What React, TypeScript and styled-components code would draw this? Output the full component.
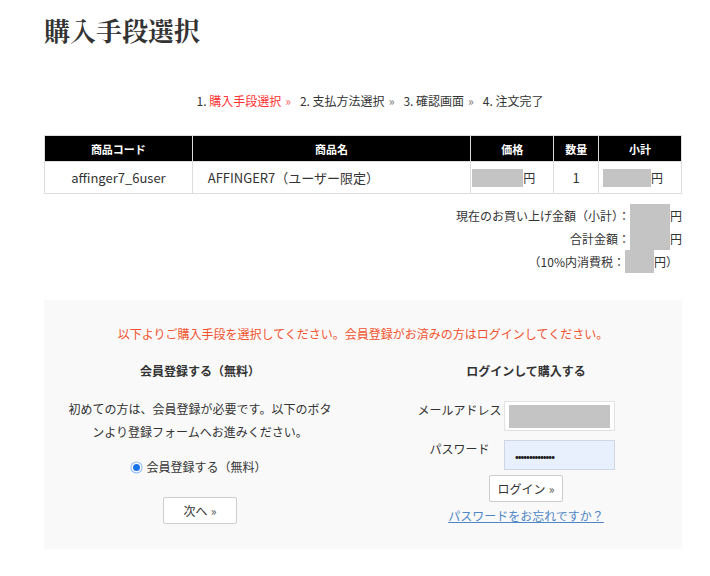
import React from "react";
import styled, { createGlobalStyle } from "styled-components";

const Global = createGlobalStyle`
  html, body { margin: 0; padding: 0; background: #fff; }
  body {
    font-family: "Noto Sans CJK JP", "Noto Sans", sans-serif;
    color: #333;
  }
`;

const Page = styled.div`
  width: 638px;
  padding: 12px 28px 28px 44px;
`;

const Title = styled.h1`
  margin: 0;
  font-family: "Noto Serif CJK JP", "Noto Sans CJK JP", serif;
  font-size: 26px;
  line-height: 36px;
  font-weight: 700;
  color: #333;
  letter-spacing: 0;
`;

const Steps = styled.ol`
  list-style: none;
  margin: 43px 0 0;
  padding: 0 0 0 14px;
  display: flex;
  justify-content: center;
  gap: 9px;
  font-size: 12px;
  line-height: 20px;
`;

const Step = styled.li<{ $active?: boolean }>`
  color: #333;
  span.name { color: ${(p) => (p.$active ? "#f33" : "#333")}; }
  span.sep {
    margin-left: 4px;
    font-size: 12px;
    color: ${(p) => (p.$active ? "#f66" : "#777")};
  }
`;

const Table = styled.table`
  margin-top: 24px;
  width: 100%;
  border-collapse: collapse;
  table-layout: fixed;
  font-size: 13px;
`;

const ColW = styled.col<{ $w: number }>`
  width: ${(p) => (p.$w / 638) * 100}%;
`;

const Th = styled.th`
  height: 25px;
  padding: 0;
  background: #000;
  color: #fff;
  font-size: 11px;
  font-weight: 700;
  border: 1px solid #ddd;
  text-align: center;
`;

const Td = styled.td<{ $align?: string; $pad?: number }>`
  height: 31px;
  padding: 0 ${(p) => p.$pad ?? 0}px;
  border: 1px solid #ddd;
  text-align: ${(p) => p.$align ?? "center"};
  color: #333;
`;

const Amount = styled.div<{ $pad: number }>`
  display: flex;
  align-items: center;
  padding-left: ${(p) => p.$pad}px;
  font-size: 12px;
`;

const Hidden = styled.span<{ $w: number; $h?: number }>`
  display: inline-block;
  width: ${(p) => p.$w}px;
  height: ${(p) => p.$h ?? 18}px;
  background: #c4c4c4;
  vertical-align: middle;
`;

const Summary = styled.div`
  margin-top: 10px;
  display: flex;
  flex-direction: column;
  align-items: flex-end;
  font-size: 12px;
  line-height: 23px;
`;

const SumLine = styled.div<{ $right: number }>`
  display: flex;
  align-items: center;
  padding-right: ${(p) => p.$right}px;
`;

const Panel = styled.section`
  margin-top: 27px;
  background: #f9f9f9;
  padding: 24px 21px 24px;
`;

const Notice = styled.p`
  margin: 0;
  text-align: center;
  color: #f0532d;
  font-size: 12px;
  line-height: 20px;
`;

const Columns = styled.div`
  margin-top: 17px;
  display: grid;
  grid-template-columns: 270px 270px;
  gap: 56px;
`;

const Col = styled.div`
  display: flex;
  flex-direction: column;
  align-items: center;
`;

const ColTitle = styled.h3`
  margin: 0;
  font-size: 12px;
  line-height: 20px;
  font-weight: 700;
  color: #333;
`;

const Para = styled.p`
  margin: 16px 0 0;
  font-size: 12px;
  line-height: 23px;
  text-align: center;
  color: #333;
`;

const RadioRow = styled.label`
  margin-top: 14px;
  display: flex;
  align-items: center;
  gap: 4px;
  font-size: 12px;
  line-height: 20px;
  color: #333;
`;

const RadioDot = styled.span`
  width: 7px;
  height: 7px;
  border-radius: 50%;
  background: #1a73e8;
  box-shadow: 0 0 0 1.5px #fff, 0 0 0 2.5px #8ab4f8;
  margin-right: 2px;
`;

const Button = styled.button<{ $w: number; $mt: number }>`
  margin-top: ${(p) => p.$mt}px;
  width: ${(p) => p.$w}px;
  height: 27px;
  padding: 0;
  background: #fff;
  border: 1px solid #ccc;
  border-radius: 2px;
  font-family: "Noto Sans CJK JP", sans-serif;
  font-size: 12px;
  color: #333;
  span { font-size: 12px; color: #555; margin-left: 3px; }
`;

const Form = styled.div`
  margin-top: 20px;
  align-self: flex-start;
  padding-left: 26px;
  display: grid;
  grid-template-columns: 85px 111px;
  column-gap: 2px;
  row-gap: 9px;
`;

const Label = styled.span`
  text-align: center;
  font-size: 12px;
  line-height: 16px;
  padding-top: 1px;
  color: #333;
`;

const Input = styled.div<{ $filled?: boolean }>`
  height: 28px;
  border: 1px solid ${(p) => (p.$filled ? "#cfd6e2" : "#e2e2e2")};
  background: ${(p) => (p.$filled ? "#e8f0fe" : "#fff")};
  display: flex;
  align-items: center;
  padding: 0 4px;
  font-size: 10px;
  letter-spacing: -1px;
  color: #222;
`;

const Dots = styled.span`
  padding-left: 6px;
  font-weight: 700;
`;

const Forgot = styled.a`
  margin-top: 5px;
  font-size: 12px;
  line-height: 18px;
  color: #4f86c6;
  text-decoration: underline;
`;

export default function App() {
  return (
    <Page>
      <Global />
      <Title>購入手段選択</Title>
      <Steps>
        <Step $active>
          1. <span className="name">購入手段選択</span>
          <span className="sep">»</span>
        </Step>
        <Step>
          2. <span className="name">支払方法選択</span>
          <span className="sep">»</span>
        </Step>
        <Step>
          3. <span className="name">確認画面</span>
          <span className="sep">»</span>
        </Step>
        <Step>
          4. <span className="name">注文完了</span>
        </Step>
      </Steps>

      <Table>
        <colgroup>
          <ColW $w={148} />
          <ColW $w={279} />
          <ColW $w={83} />
          <ColW $w={45} />
          <ColW $w={83} />
        </colgroup>
        <thead>
          <tr>
            <Th>商品コード</Th>
            <Th>商品名</Th>
            <Th>価格</Th>
            <Th>数量</Th>
            <Th>小計</Th>
          </tr>
        </thead>
        <tbody>
          <tr>
            <Td>affinger7_6user</Td>
            <Td $align="left" $pad={15}>
              AFFINGER7（ユーザー限定）
            </Td>
            <Td $align="left">
              <Amount $pad={1}>
                <Hidden $w={51} />円
              </Amount>
            </Td>
            <Td>1</Td>
            <Td $align="left">
              <Amount $pad={4}>
                <Hidden $w={48} />円
              </Amount>
            </Td>
          </tr>
        </tbody>
      </Table>

      <Summary>
        <SumLine $right={0}>
          現在のお買い上げ金額（小計）：<Hidden $w={40} $h={23} />円
        </SumLine>
        <SumLine $right={0}>
          合計金額：<Hidden $w={40} $h={23} />円
        </SumLine>
        <SumLine $right={4}>
          （10%内消費税：<Hidden $w={29} $h={23} />円）
        </SumLine>
      </Summary>

      <Panel>
        <Notice>
          以下よりご購入手段を選択してください。会員登録がお済みの方はログインしてください。
        </Notice>
        <Columns>
          <Col>
            <ColTitle>会員登録する（無料）</ColTitle>
            <Para>
              初めての方は、会員登録が必要です。以下のボタンより登録フォームへお進みください。
            </Para>
            <RadioRow>
              <RadioDot />
              会員登録する（無料）
            </RadioRow>
            <Button $w={74} $mt={20}>
              次へ<span>»</span>
            </Button>
          </Col>
          <Col>
            <ColTitle>ログインして購入する</ColTitle>
            <Form>
              <Label>メールアドレス</Label>
              <Input>
                <Hidden $w={101} $h={23} />
              </Input>
              <Label>パスワード</Label>
              <Input $filled>
                <Dots>••••••••••••••</Dots>
              </Input>
            </Form>
            <Button $w={74} $mt={5}>
              ログイン<span>»</span>
            </Button>
            <Forgot href="#">パスワードをお忘れですか？</Forgot>
          </Col>
        </Columns>
      </Panel>
    </Page>
  );
}
